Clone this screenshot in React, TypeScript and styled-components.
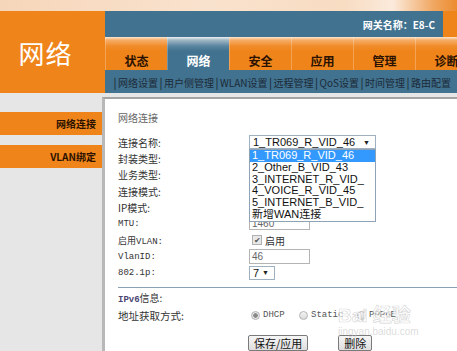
import styled, { createGlobalStyle } from 'styled-components';

const GlobalStyle = createGlobalStyle`
  html, body {
    margin: 0;
    padding: 0;
  }
  body {
    background: #e6e6e6;
    font-family: "Noto Sans CJK SC", "Liberation Sans", sans-serif;
  }
`;

const ORANGE = '#ef841a';
const BLUE = '#41728f';

const Page = styled.div`
  position: relative;
  width: 457px;
  height: 351px;
  overflow: hidden;
  display: flex;
  flex-direction: column;
  background: #e6e6e6;
`;

const TopStrip = styled.div`
  height: 11px;
  flex-shrink: 0;
  background: linear-gradient(90deg, #f6d6ba 0%, #f9e2cd 45%, #f8dcc2 75%, #fbeadb 86%, #f0a660 95%, #ec8c30 100%);
`;

const Header = styled.div`
  display: flex;
  height: 82px;
  flex-shrink: 0;
`;

const Logo = styled.div`
  width: 105px;
  flex-shrink: 0;
  background: ${ORANGE};
  color: #fff;
  font-size: 26px;
  display: flex;
  align-items: center;
  justify-content: center;
  padding-right: 14px;
  box-sizing: border-box;
  letter-spacing: 1px;
`;

const HeaderMain = styled.div`
  flex: 1;
  display: flex;
  flex-direction: column;
  background: ${BLUE};
  overflow: hidden;
`;

const InfoBar = styled.div`
  height: 26px;
  display: flex;
  justify-content: flex-end;
  align-items: center;
`;

const GatewayName = styled.span`
  color: #fff;
  font-size: 10px;
  font-weight: bold;
  margin-right: 8px;
`;

const InfoCorner = styled.div`
  width: 14px;
  align-self: stretch;
  background: ${ORANGE};
`;

const Tabs = styled.div`
  height: 33px;
  display: flex;
`;

const Tab = styled.div<{ $active?: boolean }>`
  width: 62px;
  flex-shrink: 0;
  display: flex;
  align-items: flex-end;
  justify-content: center;
  padding-bottom: 2px;
  box-sizing: border-box;
  font-size: 12px;
  line-height: 14px;
  font-weight: bold;
  color: ${({ $active }) => ($active ? '#fff' : '#2b1200')};
  background: ${({ $active }) =>
    $active
      ? 'linear-gradient(180deg, #eef2f4 0px, #a3b8c6 3px, #5a86a0 9px, #41728f 14px)'
      : 'linear-gradient(180deg, #fde6cf 0px, #f6ae6a 3px, #f08c2a 9px, #ef841a 14px)'};
  border-left: 1px solid rgba(255, 255, 255, 0.25);
`;

const SubNav = styled.div`
  height: 23px;
  display: flex;
  align-items: center;
  padding-left: 7px;
  font-size: 10px;
  color: #1c2a38;
  white-space: nowrap;
`;

const Pipe = styled.span`
  margin: 0 1.5px;
  font-size: 11px;
  color: #14202c;
`;

const Body = styled.div`
  flex: 1;
  display: flex;
  min-height: 0;
`;

const SideMenu = styled.div`
  width: 102px;
  flex-shrink: 0;
  padding-top: 19px;
  display: flex;
  flex-direction: column;
  gap: 10px;
`;

const MenuItem = styled.div`
  height: 23px;
  background: ${ORANGE};
  display: flex;
  align-items: center;
  justify-content: flex-end;
  padding-right: 6px;
  font-size: 10px;
  font-weight: bold;
  color: #2b1200;
`;

const Content = styled.div`
  flex: 1;
  margin-top: 4px;
  background: #fff;
  border-top: 2px solid #a4a4a4;
  border-left: 3px solid #b8b8b8;
  padding: 12px 0 0 13px;
  display: flex;
  flex-direction: column;
`;

const Title = styled.div`
  font-size: 10px;
  line-height: 14px;
  color: #666;
  margin-bottom: 9px;
`;

const FormRow = styled.div`
  display: flex;
  align-items: center;
  height: 16.5px;
`;

const Label = styled.div<{ $serif?: boolean }>`
  width: 131px;
  flex-shrink: 0;
  font-size: ${({ $serif }) => ($serif ? '9px' : '10px')};
  font-family: ${({ $serif }) =>
    $serif ? '"Liberation Mono", "Noto Sans CJK SC", monospace' : '"Noto Sans CJK SC", sans-serif'};
  color: #333;
`;

const SelectWrap = styled.div`
  position: relative;
`;

const SelectBox = styled.div<{ $width: number }>`
  width: ${({ $width }) => $width}px;
  height: 14px;
  box-sizing: border-box;
  border: 1px solid #9fb0c0;
  background: #fff;
  display: flex;
  align-items: center;
  justify-content: space-between;
  padding: 0 5px 0 3px;
  font-family: "Liberation Sans", Arial, sans-serif;
  font-size: 11px;
  color: #111;
`;

const Arrow = styled.span`
  font-size: 7px;
  color: #222;
`;

const DropList = styled.div`
  position: absolute;
  top: 14px;
  left: 0;
  width: 127px;
  box-sizing: border-box;
  border: 1px solid #8ea3b6;
  background: #fff;
  z-index: 5;
  padding-bottom: 1px;
`;

const DropItem = styled.div<{ $selected?: boolean }>`
  height: 11.7px;
  line-height: 11.7px;
  padding-left: 2px;
  font-family: "Liberation Sans", Arial, "Noto Sans CJK SC", sans-serif;
  font-size: 11px;
  white-space: nowrap;
  overflow: hidden;
  background: ${({ $selected }) => ($selected ? '#3399ff' : '#fff')};
  color: ${({ $selected }) => ($selected ? '#fff' : '#111')};
`;

const TextInput = styled.div<{ $height: number }>`
  width: 61px;
  height: ${({ $height }) => $height}px;
  box-sizing: border-box;
  border: 1px solid #b4b4b4;
  padding-left: 2px;
  display: flex;
  align-items: center;
  font-family: "Liberation Sans", Arial, sans-serif;
  font-size: 10px;
  color: #666;
`;

const CheckLabel = styled.div`
  display: flex;
  align-items: center;
  gap: 3px;
  padding-left: 3px;
  font-size: 10px;
  color: #333;
`;

const CheckBox = styled.span`
  width: 8px;
  height: 8px;
  border: 1px solid #b0b0b0;
  background: #e8e8e8;
  display: flex;
  align-items: center;
  justify-content: center;
  font-size: 8px;
  line-height: 8px;
  color: #555;
`;

const Divider = styled.div`
  margin-top: 6px;
  height: 1px;
  background: #8aa0b3;
`;

const SectionLabel = styled.div`
  margin-top: 3px;
  font-size: 10px;
  line-height: 14px;
  color: #333;
`;

const Mono = styled.span`
  font-family: "Liberation Mono", monospace;
  font-size: 9px;
  font-weight: bold;
  color: #4a4470;
`;

const AddrRow = styled.div`
  display: flex;
  align-items: center;
  height: 16px;
`;

const AddrLabel = styled.div`
  width: 133px;
  flex-shrink: 0;
  font-size: 10.5px;
  color: #333;
`;

const RadioGroup = styled.div`
  display: flex;
  align-items: center;
`;

const RadioOption = styled.div<{ $width: number }>`
  width: ${({ $width }) => $width}px;
  display: flex;
  align-items: center;
  gap: 3px;
  font-family: "Liberation Mono", monospace;
  font-size: 9px;
  color: #555;
`;

const Radio = styled.span<{ $checked?: boolean }>`
  width: 7px;
  height: 7px;
  border-radius: 50%;
  border: 1px solid #b5b5b5;
  background: ${({ $checked }) =>
    $checked ? 'radial-gradient(circle, #8a8a8a 0 2px, #e6e6e6 2.5px)' : 'linear-gradient(#f4f4f4, #dadada)'};
`;

const ButtonRow = styled.div`
  display: flex;
  gap: 30px;
  margin-top: 12px;
  padding-left: 130px;
`;

const Button = styled.div`
  height: 16px;
  box-sizing: border-box;
  border: 1px solid #7a7a7a;
  border-radius: 2px;
  background: linear-gradient(#f6f6f6, #dedede);
  padding: 0 5px;
  display: flex;
  align-items: center;
  font-size: 11px;
  color: #111;
`;

const Watermark = styled.div`
  position: absolute;
  left: 338px;
  top: 305px;
  color: rgba(255, 255, 255, 0.7);
  -webkit-text-stroke: 0.6px rgba(175, 175, 175, 0.55);
  font-family: "Liberation Sans", "Noto Sans CJK SC", sans-serif;
  pointer-events: none;
`;

const WatermarkMain = styled.div`
  font-size: 19px;
  font-weight: bold;
  line-height: 21px;
`;

const WatermarkSub = styled.div`
  font-size: 10px;
  line-height: 11px;
  -webkit-text-stroke: 0;
  color: rgba(205, 205, 205, 0.7);
`;

const tabs = ['状态', '网络', '安全', '应用', '管理', '诊断'];
const subLinks = ['网络设置', '用户侧管理', 'WLAN设置', '远程管理', 'QoS设置', '时间管理', '路由配置'];
const connections = [
  '1_TR069_R_VID_46',
  '2_Other_B_VID_43',
  '3_INTERNET_R_VID_',
  '4_VOICE_R_VID_45',
  '5_INTERNET_B_VID_',
  '新增WAN连接',
];

export default function App() {
  return (
    <Page>
      <GlobalStyle />
      <TopStrip />
      <Header>
        <Logo>网络</Logo>
        <HeaderMain>
          <InfoBar>
            <GatewayName>网关名称：E8-C</GatewayName>
            <InfoCorner />
          </InfoBar>
          <Tabs>
            {tabs.map(t => (
              <Tab key={t} $active={t === '网络'}>{t}</Tab>
            ))}
          </Tabs>
          <SubNav>
            {subLinks.map(s => (
              <span key={s}>
                <Pipe>|</Pipe>
                {s}
              </span>
            ))}
          </SubNav>
        </HeaderMain>
      </Header>
      <Body>
        <SideMenu>
          <MenuItem>网络连接</MenuItem>
          <MenuItem>VLAN绑定</MenuItem>
        </SideMenu>
        <Content>
          <Title>网络连接</Title>
          <FormRow>
            <Label>连接名称:</Label>
            <SelectWrap>
              <SelectBox $width={127}>
                <span>1_TR069_R_VID_46</span>
                <Arrow>▼</Arrow>
              </SelectBox>
              <DropList>
                {connections.map((c, i) => (
                  <DropItem key={c} $selected={i === 0}>{c}</DropItem>
                ))}
              </DropList>
            </SelectWrap>
          </FormRow>
          <FormRow><Label>封装类型:</Label></FormRow>
          <FormRow><Label>业务类型:</Label></FormRow>
          <FormRow><Label>连接模式:</Label></FormRow>
          <FormRow><Label>IP模式:</Label></FormRow>
          <FormRow>
            <Label $serif>MTU:</Label>
            <TextInput $height={13}>1460</TextInput>
          </FormRow>
          <FormRow>
            <Label $serif>启用VLAN:</Label>
            <CheckLabel>
              <CheckBox>✔</CheckBox>
              启用
            </CheckLabel>
          </FormRow>
          <FormRow>
            <Label $serif>VlanID:</Label>
            <TextInput $height={15}>46</TextInput>
          </FormRow>
          <FormRow>
            <Label $serif>802.1p:</Label>
            <SelectBox $width={26}>
              <span>7</span>
              <Arrow>▼</Arrow>
            </SelectBox>
          </FormRow>
          <Divider />
          <SectionLabel>
            <Mono>IPv6</Mono>信息:
          </SectionLabel>
          <AddrRow>
            <AddrLabel>地址获取方式:</AddrLabel>
            <RadioGroup>
              <RadioOption $width={48}><Radio $checked />DHCP</RadioOption>
              <RadioOption $width={58}><Radio />Static</RadioOption>
              <RadioOption $width={40}><Radio />PPPoE</RadioOption>
            </RadioGroup>
          </AddrRow>
          <ButtonRow>
            <Button>保存/应用</Button>
            <Button>删除</Button>
          </ButtonRow>
        </Content>
      </Body>
      <Watermark>
        <WatermarkMain>Bai 经验</WatermarkMain>
        <WatermarkSub>jingyan.baidu.com</WatermarkSub>
      </Watermark>
    </Page>
  );
}
